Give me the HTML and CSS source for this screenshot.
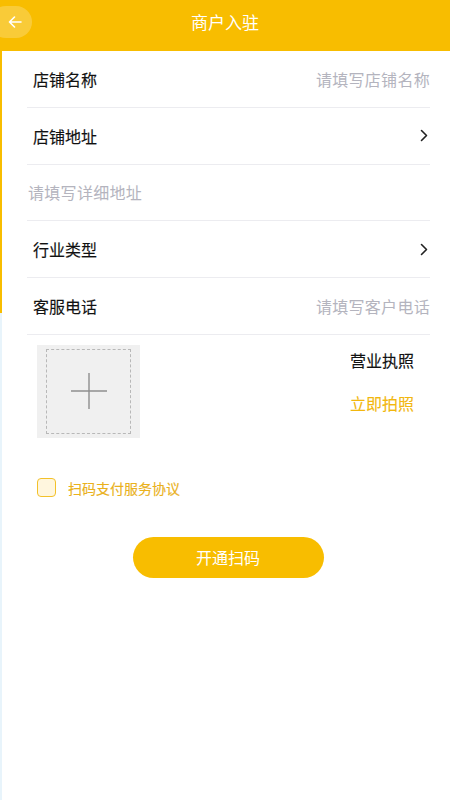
FILE: index.html
```html
<!DOCTYPE html>
<html lang="zh">
<head>
<meta charset="utf-8">
<title>商户入驻</title>
<link rel="stylesheet" href="styles.css">
</head>
<body>
<header class="topbar">
  <div class="back">
    <svg width="14" height="12" viewBox="0 0 14 12"><path d="M13 6H1.5M6.5 1L1.5 6l5 5" fill="none" stroke="#fff" stroke-width="1.6" stroke-linecap="round" stroke-linejoin="round"/></svg>
  </div>
  <h1 class="title">商户入驻</h1>
</header>
<main class="page">
  <div class="form">
    <div class="row">
      <span class="label">店铺名称</span>
      <span class="ph">请填写店铺名称</span>
    </div>
    <div class="row">
      <span class="label">店铺地址</span>
      <svg class="chev" width="8" height="13" viewBox="0 0 8 13"><path d="M1.5 1.5l5 5-5 5" fill="none" stroke="#222" stroke-width="1.6" stroke-linecap="round" stroke-linejoin="round"/></svg>
    </div>
    <div class="row">
      <span class="ph ph-left">请填写详细地址</span>
    </div>
    <div class="row">
      <span class="label">行业类型</span>
      <svg class="chev" width="8" height="13" viewBox="0 0 8 13"><path d="M1.5 1.5l5 5-5 5" fill="none" stroke="#222" stroke-width="1.6" stroke-linecap="round" stroke-linejoin="round"/></svg>
    </div>
    <div class="row">
      <span class="label">客服电话</span>
      <span class="ph">请填写客户电话</span>
    </div>
  </div>
  <section class="upload">
    <div class="upbox">
      <div class="dash">
        <svg width="38" height="38" viewBox="0 0 38 38"><path d="M19 1v36M1 19h36" stroke="#8e8e8e" stroke-width="1.4"/></svg>
      </div>
    </div>
    <div class="uptext">
      <span class="uplabel">营业执照</span>
      <span class="upact">立即拍照</span>
    </div>
  </section>
  <label class="agree">
    <span class="box"></span>
    <span class="agree-text">扫码支付服务协议</span>
  </label>
  <div class="btnwrap">
    <button class="submit">开通扫码</button>
  </div>
</main>
</body>
</html>
```
FILE: styles.css
```css
* { box-sizing: border-box; }
html, body { margin: 0; padding: 0; }
body {
  width: 450px;
  height: 800px;
  overflow: hidden;
  background: #fff;
  font-family: "Noto Sans CJK SC", "Noto Sans", sans-serif;
  color: #111;
}
.topbar {
  height: 51px;
  background: #f8bd00;
  position: relative;
  display: flex;
  align-items: center;
  justify-content: center;
}
.back {
  position: absolute;
  left: -10px;
  top: 6px;
  width: 42px;
  height: 32px;
  border-radius: 16px;
  background: rgba(255,255,255,0.22);
  display: flex;
  align-items: center;
  justify-content: center;
  padding-left: 8px;
}
.title {
  margin: 0;
  margin-top: -8px;
  font-size: 17px;
  font-weight: 400;
  color: #fff;
}
.page {
  height: 749px;
  background: linear-gradient(to bottom, #f8bd00 0, #f8bd00 262px, #e8f4fb 262px, #e8f4fb 100%) no-repeat left top / 2px 100%;
}
.form {
  margin: 0 20px 0 27px;
}
.row {
  height: 56.8px;
  border-bottom: 1px solid #ececf0;
  display: flex;
  align-items: center;
  justify-content: space-between;
  padding-left: 6px;
}
.label {
  font-size: 16px;
  font-weight: 400;
  color: #111;
  -webkit-text-stroke: 0.15px #111;
}
.ph {
  font-size: 16px;
  font-weight: 400;
  letter-spacing: 0.3px;
  color: #b4b4be;
}
.ph-left { margin-left: -5px; }
.chev { margin-right: 2px; }
.upload {
  display: flex;
  justify-content: space-between;
  padding: 10px 36px 0 37px;
}
.upbox {
  width: 103px;
  height: 93px;
  background: #f0f0f0;
  padding: 4px 9px;
}
.dash {
  width: 100%;
  height: 100%;
  border: 1px dashed #b8b8b8;
  display: flex;
  align-items: center;
  justify-content: center;
}
.uptext {
  display: flex;
  flex-direction: column;
  align-items: flex-end;
  gap: 19px;
  padding-top: 3px;
}
.uplabel { font-size: 16px; color: #111; -webkit-text-stroke: 0.15px #111; }
.upact { font-size: 16px; color: #f2b70e; -webkit-text-stroke: 0.1px #f2b70e; }
.agree {
  display: flex;
  align-items: center;
  gap: 12px;
  margin: 40px 0 0 37px;
}
.box {
  width: 19px;
  height: 19px;
  border: 1.5px solid #f3c12a;
  border-radius: 4px;
  background: #fff6de;
}
.agree-text {
  font-size: 14px;
  color: #eab11c;
  -webkit-text-stroke: 0.15px #eab11c;
}
.btnwrap {
  display: flex;
  justify-content: center;
  margin-top: 39px;
  padding-left: 6px;
}
.submit {
  width: 191px;
  height: 41px;
  border: 0;
  border-radius: 21px;
  background: #f8bd00;
  color: #fff;
  font-family: inherit;
  font-size: 16px;
  font-weight: 400;
}
```
